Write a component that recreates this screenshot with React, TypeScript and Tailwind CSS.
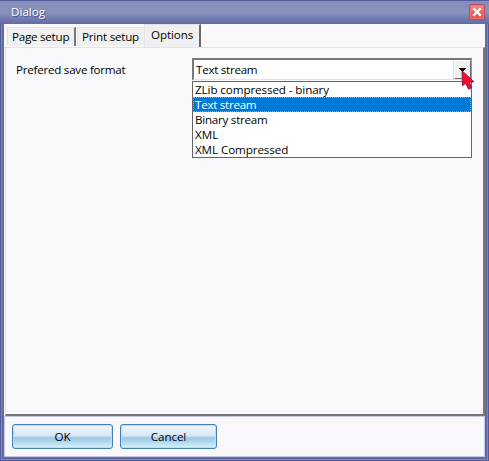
const formats = ['ZLib compressed - binary', 'Text stream', 'Binary stream', 'XML', 'XML Compressed'];
const tracking = ['tracking-[-0.1px]', 'tracking-[-0.28px]', 'tracking-[-0.26px]', 'tracking-[0.05px]', 'tracking-[-0.1px]'];

function Label({ text, className = 'tracking-[-0.26px]' }: { text: string; className?: string }) {
  return <span className={`block h-[15px] leading-[15px] whitespace-nowrap ${className}`}>{text}</span>;
}

function TitleBar() {
  return (
    <header className="flex h-6 shrink-0 items-start justify-between border-t border-[#535c99] bg-linear-to-b from-[#858dbc] via-[#8991bd] to-[#626ba5] pr-[4px] pl-[11px]">
      <Label text="Dialog" className="mt-[3px] text-white [text-shadow:1px_1px_1px_#424b85]" />
      <button aria-label="Close" className="mt-[3px] flex size-4 items-center justify-center rounded-[2px] border border-[#b84d64] bg-linear-to-b from-[#f58e8b] via-[#ed625f] to-[#e9504b] shadow-[inset_0_0_0_1px_#f3736f]">
        <svg width="10" height="10" viewBox="0 0 10 10" fill="none" stroke="white" strokeWidth="2.3"><path d="M1.2 1.2 8.8 8.8M8.8 1.2 1.2 8.8" /></svg>
      </button>
    </header>
  );
}

function Tabs() {
  return (
    <nav className="flex h-[23px] items-end pl-[3px]">
      <div className="mb-[1px] h-[19px] w-[69px] border-t border-l border-[#e3e3e5] border-r-2 border-r-[#777] bg-[#f0f0f0] pt-px pl-[4px]"><Label text="Page setup" className="tracking-[-0.26px]" /></div>
      <div className="mb-[1px] ml-px h-[19px] w-[67px] border-t border-l border-[#e3e3e5] bg-[#f0f0f0] pt-px pl-[4px]"><Label text="Print setup" className="tracking-[-0.23px]" /></div>
      <div className="h-[23px] w-[57px] border-t border-l border-[#e3e3e5] border-r-2 border-r-[#696969] bg-[#f0f0f0] pt-[2px] pl-[6px]"><Label text="Options" className="tracking-[-0.1px]" /></div>
    </nav>
  );
}

function FormatSelect() {
  return (
    <div className="relative h-[23px] w-[280px]">
      <div className="flex h-[22px] border-t-2 border-l-2 border-[#777] border-r border-b border-r-[#999] border-b-[#e3e3e3] bg-white">
        <div className="flex-1 pt-[2px] pl-[2px]"><Label text="Text stream" className="tracking-[-0.28px]" /></div>
        <button aria-label="Show formats" className="flex h-[19px] w-[17px] items-center justify-center border border-[#fff] border-r-[#696969] border-b-[#696969] bg-[#f0f0f0] shadow-[-1px_0_0_#ddd]">
          <svg width="7" height="4" viewBox="0 0 7 4" shapeRendering="crispEdges"><path d="M0 0h7v1h-1v1h-1v1h-1v1h-1v-1h-1v-1h-1v-1h-1z" /></svg>
        </button>
      </div>
      <div className="absolute top-[23px] left-0 w-[280px] border border-[#646464] bg-white">
        {formats.map((format, i) => (
          <div key={format} className={i === 1 ? 'h-[15px] bg-[#0078d7] pl-[2px] text-white outline-1 -outline-offset-1 outline-dotted outline-[#ff8728]' : 'h-[15px] pl-[2px]'}>
            <Label text={format} className={tracking[i]} />
          </div>
        ))}
      </div>
      <svg className="absolute top-[12px] left-[269px]" width="14" height="21" viewBox="0 0 14 21"><path d="M1 .8 1.5 15.8 4.6 13.2 7.6 19.2 10.4 17.9 8.4 12.2 13 11.8z" fill="#ff0834" stroke="#7b1230" strokeWidth=".9" /></svg>
    </div>
  );
}

function ActionButton({ text, wide }: { text: string; wide?: boolean }) {
  return (
    <button className={`${wide ? 'w-[101px]' : 'w-[97px]'} flex h-[25px] items-center justify-center rounded-[3px] border border-[#467eb8] bg-[linear-gradient(#f1f7fc_0%,#d5e7f5_48%,#a4cae6_54%,#a8cee8_65%,#d4f4fd_100%)] shadow-[inset_0_0_0_1px_#bcddf2]`}>
      <Label text={text} className="tracking-[-0.1px]" />
    </button>
  );
}

export default function App() {
  return (
    <main className="flex h-[461px] w-[489px] flex-col overflow-hidden bg-[#616aa5] font-['Open_Sans','Noto_Sans',sans-serif] text-[11.65px] text-black">
      <TitleBar />
      <div className="flex h-[437px] border-x border-b border-[#535c99]">
        <div className="flex w-full border-x border-b border-[#7e87bb] px-[2px] pb-[2px]">
          <div className="flex w-[481px] flex-col bg-[#f9f9fb]">
            <Tabs />
            <section className="ml-px h-[369px] w-[480px] border-t border-l border-[#e3e3e3] border-r-2 border-b-2 border-r-[#777] border-b-[#777] pt-[10px] pl-[10px]">
              <div className="flex">
                <div className="w-[176px] pt-[4px]"><Label text="Prefered save format" /></div>
                <FormatSelect />
              </div>
            </section>
            <footer className="flex h-[41px] gap-[7px] border border-[#c6cae0] pt-[7px] pl-[7px]">
              <ActionButton text="OK" wide />
              <ActionButton text="Cancel" />
            </footer>
          </div>
        </div>
      </div>
    </main>
  );
}
